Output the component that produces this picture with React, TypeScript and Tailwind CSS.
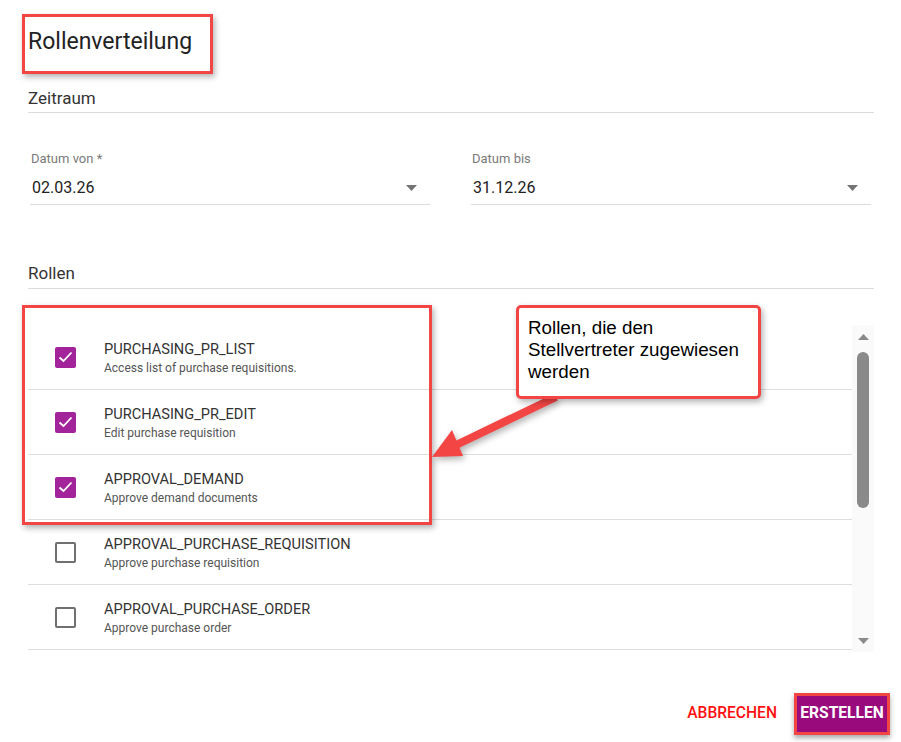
import React from "react";

const roles = [
  { name: "PURCHASING_PR_LIST", desc: "Access list of purchase requisitions.", checked: true },
  { name: "PURCHASING_PR_EDIT", desc: "Edit purchase requisition", checked: true },
  { name: "APPROVAL_DEMAND", desc: "Approve demand documents", checked: true },
  { name: "APPROVAL_PURCHASE_REQUISITION", desc: "Approve purchase requisition", checked: false },
  { name: "APPROVAL_PURCHASE_ORDER", desc: "Approve purchase order", checked: false },
];

function Caret() {
  return (
    <svg width="11" height="6" viewBox="0 0 11 6" className="shrink-0">
      <path d="M0 0 L11 0 L5.5 6 Z" fill="#757575" />
    </svg>
  );
}

function Field({ label, value }: { label: string; value: string }) {
  return (
    <div className="flex flex-col w-[400px] border-b border-[#dcdcdc]">
      <div className="h-[16px] leading-[16px] text-[13px] text-[#7a7a7a] pl-[1px]">{label}</div>
      <div className="flex items-center justify-between h-[22px] mt-[10px] mb-[5px] pr-[13px]">
        <span className="text-[16px] leading-[22px] text-[#222] pl-[2px]">{value}</span>
        <Caret />
      </div>
    </div>
  );
}

export default function App() {
  return (
    <div
      className="relative w-[901px] h-[742px] overflow-hidden bg-white"
      style={{ fontFamily: "Roboto, 'Noto Sans', sans-serif" }}
    >
      <div className="flex flex-col pl-[28px] pr-[27px]">
        <div className="mt-[28px] h-[28px] leading-[28px] text-[23px] font-normal text-[#222]">Rollenverteilung</div>

        <div className="mt-[31px] h-[26px] leading-[22px] text-[17px] text-[#333] border-b border-[#dcdcdc]">Zeitraum</div>

        <div className="mt-[38px] flex gap-[41px] pl-[2px]">
          <Field label="Datum von *" value="02.03.26" />
          <Field label="Datum bis" value="31.12.26" />
        </div>

        <div className="mt-[57px] h-[27px] leading-[22px] text-[17px] text-[#333] border-b border-[#dcdcdc]">Rollen</div>

        <div className="mt-[36px] flex h-[327px]">
          <div className="flex-1 flex flex-col">
            {roles.map((r) => (
              <div key={r.name} className="h-[65px] shrink-0 flex items-center border-b border-[#dedede]">
                <div className="w-[76px] flex justify-start pl-[27px]">
                  {r.checked ? (
                    <div className="w-[21px] h-[21px] rounded-[2px] bg-[#a3249a] flex items-center justify-center">
                      <svg width="15" height="12" viewBox="0 0 15 12">
                        <path d="M1.5 6.5 L5.5 10 L13.5 1.5" fill="none" stroke="white" strokeWidth="1.8" />
                      </svg>
                    </div>
                  ) : (
                    <div className="w-[21px] h-[21px] rounded-[2px] border-2 border-[#707070]" />
                  )}
                </div>
                <div className="flex flex-col">
                  <span className="text-[14.6px] leading-[18px] text-[#333]">{r.name}</span>
                  <span className="text-[12px] leading-[14px] mt-[3px] text-[#555]">{r.desc}</span>
                </div>
              </div>
            ))}
          </div>
          <div className="w-[22px] bg-[#fafafa] flex flex-col items-center pt-[9px] pb-[8px]">
            <svg width="11" height="6" viewBox="0 0 11 6">
              <path d="M0 6 L11 6 L5.5 0 Z" fill="#8a8a8a" />
            </svg>
            <div className="mt-[12px] w-[12px] h-[156px] rounded-full bg-[#8a8a8a]" />
            <div className="flex-1" />
            <svg width="11" height="6" viewBox="0 0 11 6">
              <path d="M0 0 L11 0 L5.5 6 Z" fill="#8a8a8a" />
            </svg>
          </div>
        </div>

        <div className="mt-[41px] flex items-center justify-end gap-[17px] mr-[-16px]">
          <span className="text-[15.6px] font-medium text-[#ff1111]">ABBRECHEN</span>
          <div className="h-[42px] w-[96px] flex items-center justify-center bg-[#990a7d] border-[3px] border-[#f44545] shadow-[0_3px_5px_rgba(0,0,0,0.35)]">
            <span className="text-[15.6px] font-bold text-white">ERSTELLEN</span>
          </div>
        </div>
      </div>

      {/* annotation: title box */}
      <div className="absolute left-[22px] top-[14px] w-[191px] h-[60px] border-[3px] border-[#f44545] shadow-[2px_3px_6px_rgba(0,0,0,0.3)]" />

      {/* annotation: roles box */}
      <div className="absolute left-[22px] top-[305px] w-[410px] h-[220px] border-[3px] border-[#f44545] shadow-[2px_3px_6px_rgba(0,0,0,0.3)]" />

      {/* arrow */}
      <svg className="absolute left-0 top-0" width="901" height="742" viewBox="0 0 901 742" style={{ filter: "drop-shadow(2px 3px 3px rgba(0,0,0,0.3))" }}>
        <line x1="556" y1="397" x2="452" y2="447" stroke="#f44545" strokeWidth="8" />
        <path d="M432 457 L452 430 L463 456 Z" fill="#f44545" />
      </svg>

      {/* callout */}
      <div
        className="absolute left-[516px] top-[305px] w-[245px] h-[94px] rounded-[5px] border-[3px] border-[#f44545] bg-white shadow-[2px_3px_6px_rgba(0,0,0,0.3)] pl-[9px] pt-[9px]"
        style={{ fontFamily: "'Liberation Sans', Arial, sans-serif" }}
      >
        <p className="text-[18.8px] leading-[22px] text-black">
          Rollen, die den
          <br />
          Stellvertreter zugewiesen
          <br />
          werden
        </p>
      </div>
    </div>
  );
}
